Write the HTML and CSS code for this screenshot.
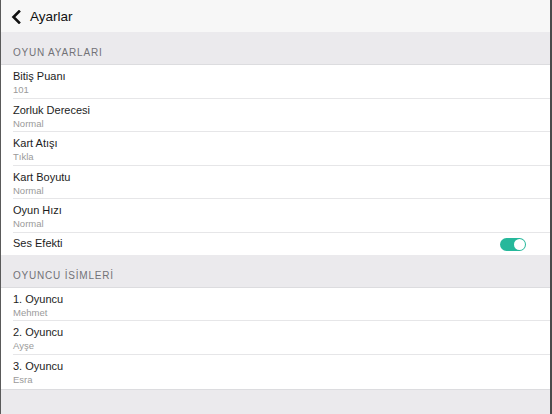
FILE: index.html
```html
<!DOCTYPE html>
<html lang="tr">
<head>
<meta charset="utf-8">
<title>Ayarlar</title>
<link rel="stylesheet" href="styles.css">
</head>
<body>
<div class="screen">
  <header class="nav">
    <svg class="back" width="10" height="14" viewBox="0 0 10 14"><path d="M8 1.5 L2.5 7 L8 12.5" fill="none" stroke="#111" stroke-width="2.6" stroke-linecap="square"/></svg>
    <span class="title">Ayarlar</span>
  </header>
  <div class="section-head">OYUN AYARLARI</div>
  <ul class="group">
    <li class="row"><span class="label">Bitiş Puanı</span><span class="sub">101</span></li>
    <li class="row"><span class="label">Zorluk Derecesi</span><span class="sub">Normal</span></li>
    <li class="row"><span class="label">Kart Atışı</span><span class="sub">Tıkla</span></li>
    <li class="row"><span class="label">Kart Boyutu</span><span class="sub">Normal</span></li>
    <li class="row"><span class="label">Oyun Hızı</span><span class="sub">Normal</span></li>
    <li class="row row-switch"><span class="label">Ses Efekti</span><span class="switch"><span class="knob"></span></span></li>
  </ul>
  <div class="section-head">OYUNCU İSİMLERİ</div>
  <ul class="group">
    <li class="row"><span class="label">1. Oyuncu</span><span class="sub">Mehmet</span></li>
    <li class="row"><span class="label">2. Oyuncu</span><span class="sub">Ayşe</span></li>
    <li class="row row-last"><span class="label">3. Oyuncu</span><span class="sub">Esra</span></li>
  </ul>
</div>
</body>
</html>
```
FILE: styles.css
```css
html, body {
  margin: 0;
  padding: 0;
  height: 100%;
  background: #ececee;
}
body {
  font-family: "Liberation Sans", Arial, sans-serif;
  color: #1a1a1a;
}
.screen {
  height: 414px;
  box-sizing: border-box;
  border-left: 1px solid #5a5a5a;
  border-right: 2px solid #4a4a4a;
  background: #ebeaed;
  overflow: hidden;
}
.nav {
  height: 32px;
  box-sizing: border-box;
  padding: 1px 0 0 10px;
  background: #f7f7f7;
  display: flex;
  align-items: center;
  gap: 9px;
}
.back { display: block; }
.title {
  font-size: 13.5px;
  color: #111;
}
.section-head {
  height: 33px;
  box-sizing: border-box;
  padding: 15px 0 0 12px;
  font-size: 10px;
  color: #727277;
  letter-spacing: 0.8px;
  border-bottom: 1px solid #dcdcdf;
}
.group {
  list-style: none;
  margin: 0;
  padding: 0 0 0 12px;
  background: #fff;
}
.row {
  height: 33.5px;
  box-sizing: border-box;
  padding-top: 5px;
  border-bottom: 1px solid #e6e6e8;
  display: flex;
  flex-direction: column;
}
.row-last { height: 35px; border-bottom: 1px solid #dcdcdf; margin-left: -12px; padding-left: 12px; }
.label {
  font-size: 11px;
  line-height: 13px;
  color: #1c1c1c;
}
.sub {
  margin-top: 1px;
  font-size: 9.5px;
  line-height: 11px;
  color: #9a9a9a;
}
.row-switch {
  height: 22px;
  padding-top: 4px;
  flex-direction: row;
  justify-content: space-between;
  align-items: flex-start;
  border-bottom: none;
  padding-right: 24px;
}
.switch {
  width: 26px;
  height: 13px;
  margin-top: 1px;
  border-radius: 7px;
  background: #26b89b;
  position: relative;
}
.knob {
  position: absolute;
  right: 1px;
  top: 1px;
  width: 11px;
  height: 11px;
  border-radius: 50%;
  background: #fff;
}
```
